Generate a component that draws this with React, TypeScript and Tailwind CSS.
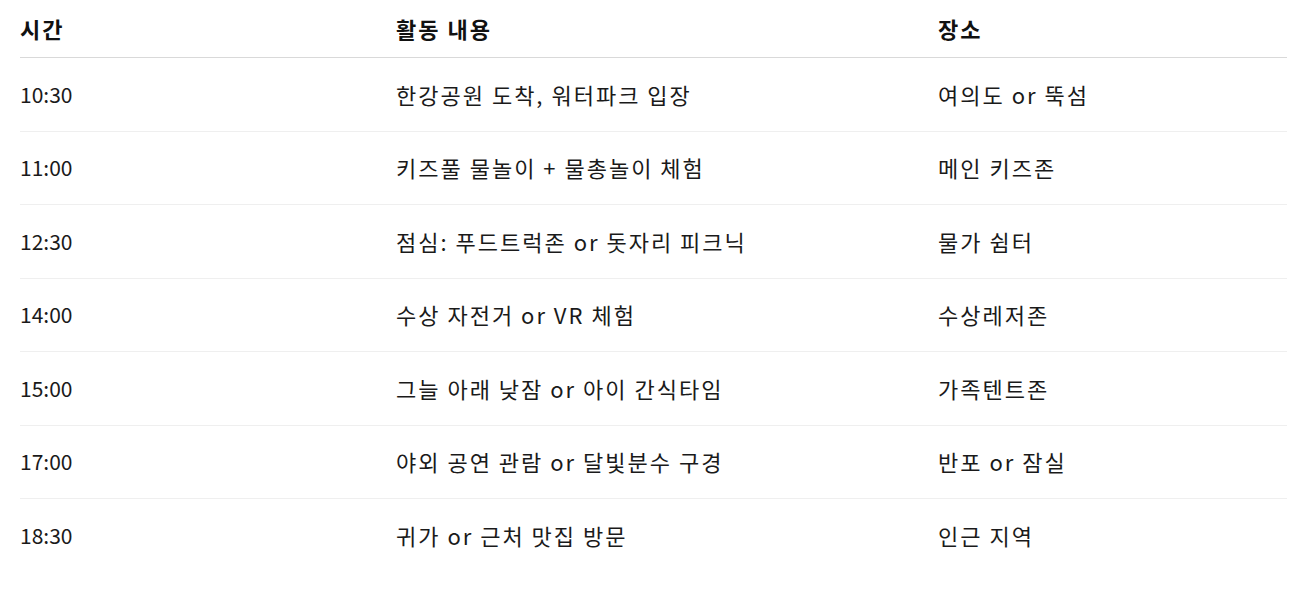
const rows = [
  ["10:30", "한강공원 도착, 워터파크 입장", "여의도 or 뚝섬"],
  ["11:00", "키즈풀 물놀이 + 물총놀이 체험", "메인 키즈존"],
  ["12:30", "점심: 푸드트럭존 or 돗자리 피크닉", "물가 쉼터"],
  ["14:00", "수상 자전거 or VR 체험", "수상레저존"],
  ["15:00", "그늘 아래 낮잠 or 아이 간식타임", "가족텐트존"],
  ["17:00", "야외 공연 관람 or 달빛분수 구경", "반포 or 잠실"],
  ["18:30", "귀가 or 근처 맛집 방문", "인근 지역"],
];

export default function App() {
  return (
    <div
      className="min-h-screen bg-white pl-5 text-[22px] tracking-[2px] text-[#1a1a1a]"
      style={{ fontFamily: '"Noto Sans CJK KR", "Noto Sans", sans-serif' }}
    >
      <div className="w-[1267px]">
        {/* header */}
        <div className="grid h-[58px] grid-cols-[376px_542px_1fr] items-center border-b border-[#d9d9d9] font-bold text-[#111]">
          <div>시간</div>
          <div>활동 내용</div>
          <div>장소</div>
        </div>

        {rows.map((r, i) => (
          <div
            key={r[0]}
            className={
              "grid h-[73.5px] grid-cols-[376px_542px_1fr] items-center " +
              (i < rows.length - 1 ? "border-b border-[#efefef]" : "")
            }
          >
            <div className="text-[21px] tracking-normal">{r[0]}</div>
            <div>{r[1]}</div>
            <div>{r[2]}</div>
          </div>
        ))}
      </div>
    </div>
  );
}
